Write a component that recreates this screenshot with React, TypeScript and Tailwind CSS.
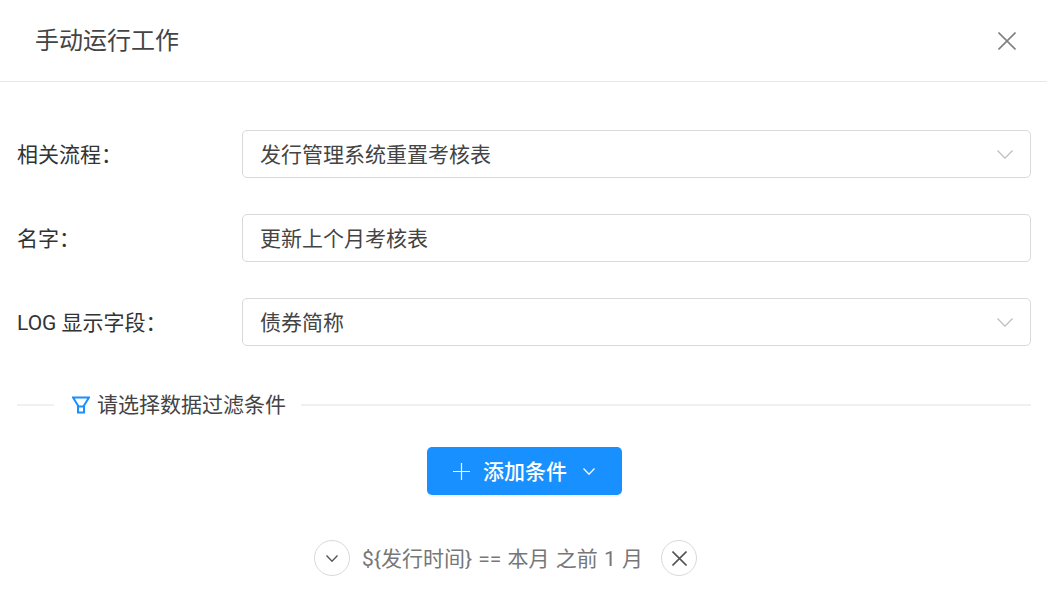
import React from "react";

const FONT = "font-['Roboto','Noto_Sans_CJK_SC',sans-serif]";

const FilterIcon = () => (
  <svg width="18" height="18" viewBox="0 0 18 18" fill="none" stroke="#1890ff" strokeWidth="2">
    <path d="M1 1.5H17L12 9.5V16.5H6V9.5Z" />
    <path d="M6 10.5H12" />
  </svg>
);

const Chevron = ({ w, h, color, sw = 1.2 }: { w: number; h: number; color: string; sw?: number }) => (
  <svg width={w} height={h} viewBox={`0 0 ${w} ${h}`} fill="none" stroke={color} strokeWidth={sw}>
    <path d={`M0.5 0.5L${w / 2} ${h - 0.8}L${w - 0.5} 0.5`} />
  </svg>
);

const Cross = ({ s, color, sw }: { s: number; color: string; sw: number }) => (
  <svg width={s} height={s} viewBox={`0 0 ${s} ${s}`} fill="none" stroke={color} strokeWidth={sw}>
    <path d={`M0.5 0.5L${s - 0.5} ${s - 0.5}M${s - 0.5} 0.5L0.5 ${s - 0.5}`} />
  </svg>
);

const FormRow = ({ label, value, select }: { label: string; value: string; select?: boolean }) => (
  <div className="flex items-center h-12">
    <label className="w-[225px] shrink-0 pt-1 text-[21px] text-[#333]">{label}</label>
    <div className="flex-1 h-12 flex items-center justify-between pl-[17px] pr-[17px] bg-white border border-[#d9d9d9] rounded-[5px] text-[21px] text-[#444]">
      <span className="pt-1">{value}</span>
      {select && <Chevron w={16} h={9} color="#bdbdbd" />}
    </div>
  </div>
);

export default function App() {
  return (
    <div className={`w-[1047px] h-[613px] overflow-hidden bg-white ${FONT}`}>
      <div className="h-[82px] flex items-center justify-between pl-[35px] pr-[31px] border-b border-[#e8e8e8]">
        <h2 className="text-[24px] text-[#444]">手动运行工作</h2>
        <Cross s={18} color="#808080" sw={1.6} />
      </div>

      <div className="pt-12 pl-[17px] pr-4">
        <div className="flex flex-col gap-9">
          <FormRow label="相关流程：" value="发行管理系统重置考核表" select />
          <FormRow label="名字：" value="更新上个月考核表" />
          <FormRow label="LOG 显示字段：" value="债券简称" select />
        </div>

        <div className="flex items-center mt-[44px] h-[30px]">
          <div className="w-[37px] h-0.5 bg-[#f0f0f0]" />
          <div className="flex items-center gap-[7px] pl-[18px] pr-[15px] text-[21px] text-[#444]">
            <FilterIcon />
            <span className="pt-0.5">请选择数据过滤条件</span>
          </div>
          <div className="flex-1 h-0.5 bg-[#f0f0f0]" />
        </div>

        <div className="flex justify-center mt-[27px]">
          <button className="w-[195px] h-12 flex items-center justify-center bg-[#1890ff] text-white rounded-[5px] shadow-[0_2px_0_rgba(0,0,0,0.045)] text-[21px] font-medium">
            <svg width="17" height="17" viewBox="0 0 17 17" fill="none" stroke="#fff" strokeWidth="1.2">
              <path d="M8.5 0V17M0 8.5H17" />
            </svg>
            <span className="ml-[13px] mr-[16px] pt-1">添加条件</span>
            <Chevron w={12} h={7} color="#fff" sw={1.3} />
          </button>
        </div>

        <div className="flex items-center justify-center mt-[45px] pr-[37px]">
          <div className="w-9 h-9 flex items-center justify-center rounded-full border border-[#d9d9d9]">
            <Chevron w={12} h={7} color="#555" sw={1.4} />
          </div>
          <span className="w-[280px] ml-3 mr-[19px] pt-1 text-[21px] text-[#777] whitespace-nowrap [word-spacing:1px]">{"${发行时间} == 本月 之前 1 月"}</span>
          <div className="w-9 h-9 flex items-center justify-center rounded-full border border-[#d9d9d9]">
            <Cross s={15} color="#555" sw={1.6} />
          </div>
        </div>
      </div>
    </div>
  );
}
